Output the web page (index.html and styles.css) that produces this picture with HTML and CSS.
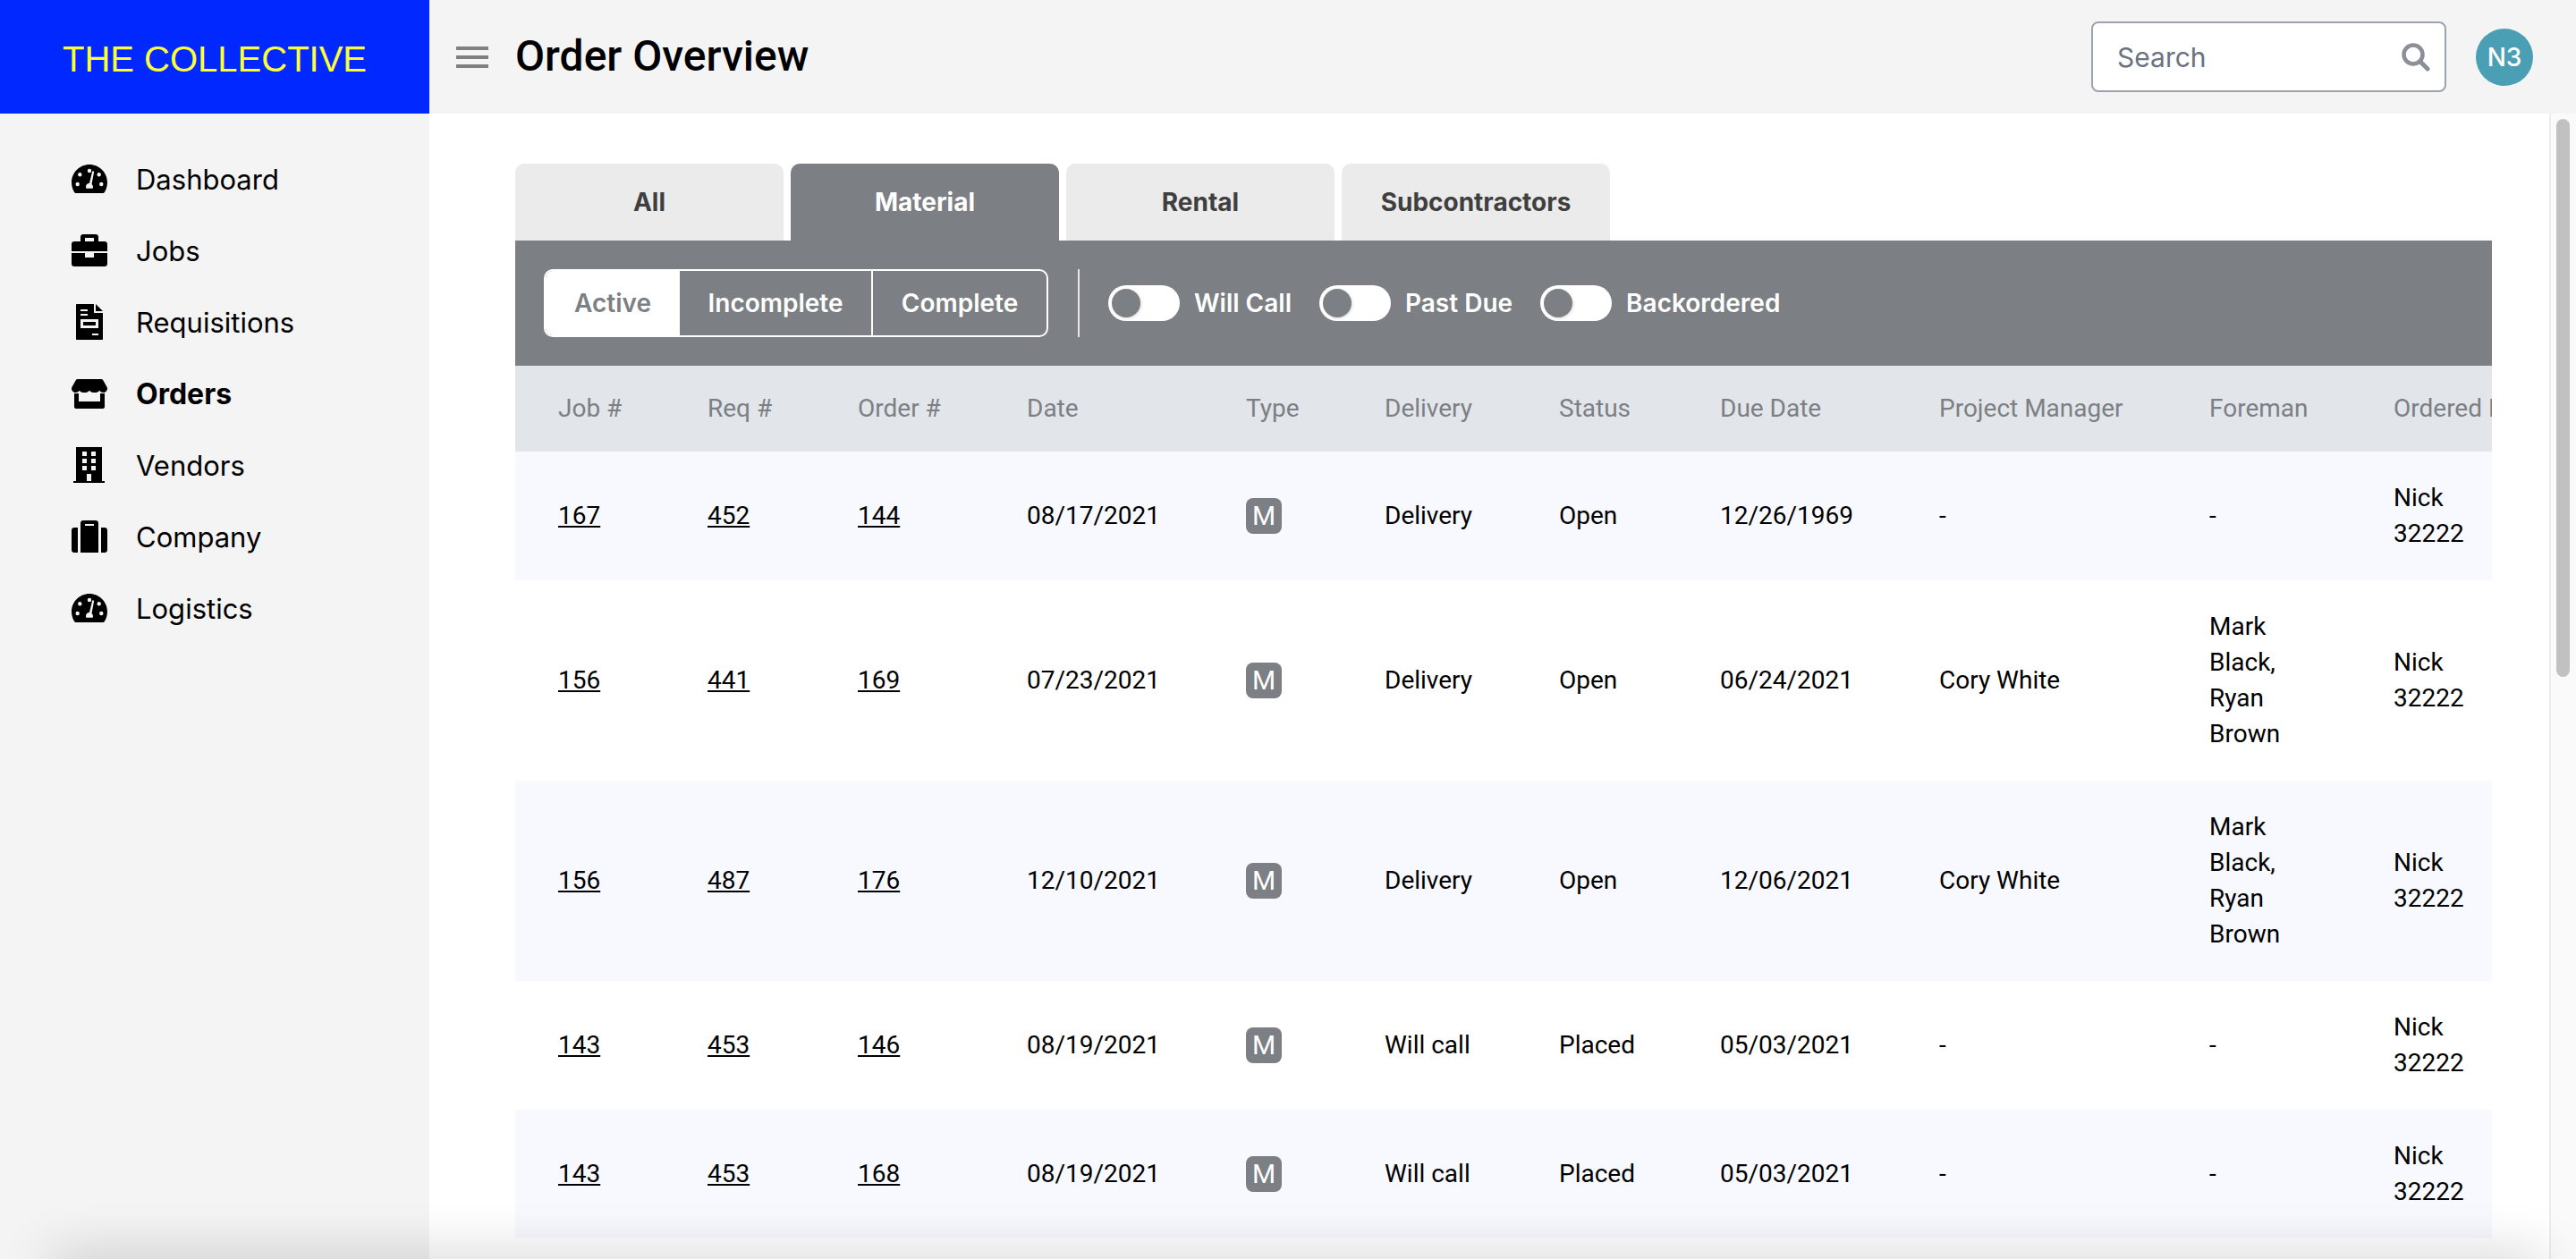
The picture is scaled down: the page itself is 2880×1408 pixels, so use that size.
FILE: index.html
```html
<!DOCTYPE html>
<html lang="en">
<head>
  <meta charset="UTF-8">
  <title>Order Overview</title>
  <link rel="stylesheet" href="styles.css">
</head>
<body>

<svg class="defs" width="0" height="0">
  <symbol id="gauge" viewBox="0 0 40 32">
    <path fill-rule="evenodd" d="M20 0C9 0 0 9 0 20c0 4.200 1.200 8.200 3.300 11.300.3.400.8.700 1.300.7h30.800c.5 0 1-.3 1.300-.7C38.800 28.200 40 24.200 40 20 40 9 31 0 20 0zM20 4.800a2.200 2.200 0 1 1 0 4.400 2.200 2.200 0 0 1 0-4.400zM9.300 9.100a2.200 2.200 0 1 1 0 4.400 2.200 2.200 0 0 1 0-4.400zM30.700 9.100a2.200 2.200 0 1 1 0 4.400 2.200 2.200 0 0 1 0-4.400zM6.700 19.800a2.200 2.200 0 1 1 0 4.400 2.200 2.200 0 0 1 0-4.400zM33.300 19.800a2.200 2.200 0 1 1 0 4.400 2.200 2.200 0 0 1 0-4.400zM23.300 7.200l1.900.6-2.700 14.100c1 .8 1.500 1.900 1.500 3.100 0 .6-.1 1.200-.4 1.800h-7.200c-.3-.6-.4-1.200-.4-1.800 0-2.300 1.800-4.100 4-4.200z"/>
  </symbol>
</svg>

<div class="app">
  <div class="logo">THE COLLECTIVE</div>

  <header class="topbar">
    <div class="burger"><span></span><span></span><span></span></div>
    <h1>Order Overview</h1>
    <div class="search">
      <span>Search</span>
      <svg width="32" height="32" viewBox="0 0 32 32"><circle cx="13" cy="13" r="10.500" fill="none" stroke="#8b9098" stroke-width="4.500"/><path d="M20.500 20.500 29 29" stroke="#8b9098" stroke-width="5" stroke-linecap="round"/></svg>
    </div>
    <div class="avatar">N3</div>
  </header>

  <nav class="sidebar">
    <a class="nav-item"><svg class="nav-icon" width="40" height="32"><use href="#gauge"/></svg>Dashboard</a>
    <a class="nav-item"><svg class="nav-icon" width="40" height="36" viewBox="0 0 40 36"><path fill-rule="evenodd" d="M13 0h14c1.700 0 3 1.300 3 3v5h7c1.700 0 3 1.300 3 3v8H0v-8c0-1.700 1.300-3 3-3h7V3c0-1.700 1.300-3 3-3zm2 4v4h10V4z"/><path d="M0 21h15v5h10v-5h15v12c0 1.700-1.300 3-3 3H3c-1.700 0-3-1.300-3-3z"/></svg>Jobs</a>
    <a class="nav-item"><svg class="nav-icon doc-icon" width="30" height="40" viewBox="0 0 30 40"><path fill-rule="evenodd" d="M1 0h19v9c0 .6.400 1 1 1h9v29c0 .6-.4 1-1 1H1c-.6 0-1-.4-1-1V1c0-.6.400-1 1-1zm4 6v2h8V6zm0 5v2h8v-2zm0 6v10h20V17zm3 3h14v4H8zm10 13v2h7v-2z"/><path d="M22 0l8 8h-8z"/></svg>Requisitions</a>
    <a class="nav-item active"><svg class="nav-icon" width="40" height="33" viewBox="0 0 40 33"><path d="M7 0h26c1 0 1.800.5 2.300 1.300L39.600 9c1 1.800.2 5.300-3.100 5.900-2.300.4-4-.6-5.200-2.200-1.200 1.500-3 2.300-5.600 2.300-2.600 0-4.500-.8-5.700-2.300-1.200 1.500-3.100 2.300-5.700 2.300-2.600 0-4.400-.8-5.600-2.300-1.200 1.600-2.900 2.600-5.200 2.200C.2 14.300-.6 10.800.4 9L4.700 1.300C5.200.5 6 0 7 0z"/><path d="M3 16h5v9h24v-9h5v15c0 1.100-.9 2-2 2H5c-1.100 0-2-.9-2-2z"/></svg>Orders</a>
    <a class="nav-item"><svg class="nav-icon bld-icon" width="35" height="40" viewBox="0 0 35 40"><path fill-rule="evenodd" d="M3 0h29v38h3v2H0v-2h3zm7 5v5h5V5zm10 0v5h5V5zM10 13v5h5v-5zm10 0v5h5v-5zM10 21v5h5v-5zm10 0v5h5v-5zm-5 9v8h5v-8z"/></svg>Vendors</a>
    <a class="nav-item"><svg class="nav-icon" width="40" height="36" viewBox="0 0 40 36"><path fill-rule="evenodd" d="M13 0h14c1.700 0 3 1.300 3 3v33H10V3c0-1.700 1.300-3 3-3zm2 4v2h10V4z"/><path d="M7 8v28H3c-1.700 0-3-1.300-3-3V11c0-1.700 1.300-3 3-3zM33 8h4c1.700 0 3 1.300 3 3v22c0 1.700-1.300 3-3 3h-4z"/></svg>Company</a>
    <a class="nav-item"><svg class="nav-icon" width="40" height="32"><use href="#gauge"/></svg>Logistics</a>
  </nav>

  <main class="main">
    <div class="content">
      <div class="tabs">
        <div class="tab">All</div>
        <div class="tab active">Material</div>
        <div class="tab">Rental</div>
        <div class="tab">Subcontractors</div>
      </div>

      <div class="toolbar">
        <div class="segments">
          <div class="segment seg-active">Active</div>
          <div class="segment seg-incomplete">Incomplete</div>
          <div class="segment seg-complete">Complete</div>
        </div>
        <div class="divider"></div>
        <div class="toggles">
          <label class="toggle-row"><span class="toggle"><span class="knob"></span></span>Will Call</label>
          <label class="toggle-row"><span class="toggle"><span class="knob"></span></span>Past Due</label>
          <label class="toggle-row"><span class="toggle"><span class="knob"></span></span>Backordered</label>
        </div>
      </div>

      <div class="table-wrap">
        <table class="orders">
          <colgroup>
            <col class="c-job"><col class="c-req"><col class="c-order"><col class="c-date"><col class="c-type"><col class="c-delivery"><col class="c-status"><col class="c-due"><col class="c-pm"><col class="c-foreman"><col class="c-by">
          </colgroup>
          <thead>
            <tr><th>Job #</th><th>Req #</th><th>Order #</th><th>Date</th><th>Type</th><th>Delivery</th><th>Status</th><th>Due Date</th><th>Project Manager</th><th>Foreman</th><th>Ordered By</th></tr>
          </thead>
          <tbody>
            <tr>
              <td><a href="#">167</a></td><td><a href="#">452</a></td><td><a href="#">144</a></td><td>08/17/2021</td><td><span class="badge">M</span></td><td>Delivery</td><td>Open</td><td>12/26/1969</td><td>-</td><td>-</td><td>Nick<br>32222</td>
            </tr>
            <tr>
              <td><a href="#">156</a></td><td><a href="#">441</a></td><td><a href="#">169</a></td><td>07/23/2021</td><td><span class="badge">M</span></td><td>Delivery</td><td>Open</td><td>06/24/2021</td><td>Cory White</td><td>Mark<br>Black,<br>Ryan<br>Brown</td><td>Nick<br>32222</td>
            </tr>
            <tr>
              <td><a href="#">156</a></td><td><a href="#">487</a></td><td><a href="#">176</a></td><td>12/10/2021</td><td><span class="badge">M</span></td><td>Delivery</td><td>Open</td><td>12/06/2021</td><td>Cory White</td><td>Mark<br>Black,<br>Ryan<br>Brown</td><td>Nick<br>32222</td>
            </tr>
            <tr>
              <td><a href="#">143</a></td><td><a href="#">453</a></td><td><a href="#">146</a></td><td>08/19/2021</td><td><span class="badge">M</span></td><td>Will call</td><td>Placed</td><td>05/03/2021</td><td>-</td><td>-</td><td>Nick<br>32222</td>
            </tr>
            <tr>
              <td><a href="#">143</a></td><td><a href="#">453</a></td><td><a href="#">168</a></td><td>08/19/2021</td><td><span class="badge">M</span></td><td>Will call</td><td>Placed</td><td>05/03/2021</td><td>-</td><td>-</td><td>Nick<br>32222</td>
            </tr>
          </tbody>
        </table>
      </div>
    </div>

    <div class="rail"><div class="thumb"></div></div>
  </main>
</div>

<div class="bottom-shadow"></div>

</body>
</html>
```

FILE: styles.css
```css
html, body { margin: 0; height: 100%; overflow: hidden; }
body { font-family: Roboto, "Liberation Sans", sans-serif; color: #000; background: #fff; }
.defs { display: block; height: 0; }

.app {
  display: grid;
  grid-template-columns: 480px 1fr;
  grid-template-rows: 127px 1fr;
  height: 1408px;
}

/* logo + top bar */
.logo {
  display: flex; align-items: center; justify-content: center;
  background: #0028ff; color: #ffff33;
  font-family: "Liberation Sans", Arial, sans-serif; font-size: 40px;
  padding-top: 5px; box-sizing: border-box;
}
.topbar {
  display: flex; align-items: center;
  background: #f4f4f4; padding: 0 48px 0 30px;
}
.burger { display: flex; flex-direction: column; gap: 6px; width: 36px; margin-right: 30px; }
.burger span { display: block; height: 4px; background: #808080; }
.topbar h1 { margin: 0 0 2px; font-size: 48px; font-weight: 500; line-height: 56px; flex: 1; }
.search {
  display: flex; align-items: center; justify-content: space-between;
  box-sizing: border-box; width: 397px; height: 79px;
  background: #fff; border: 2px solid #9ca3af; border-radius: 8px;
  padding: 0 16px 0 27px; margin-right: 33px;
  font-family: Inter, sans-serif; font-size: 30px; color: #6b7280;
}
.avatar {
  display: flex; align-items: center; justify-content: center;
  width: 64px; height: 64px; border-radius: 50%;
  background: #4a9fb5; color: #fff;
  font-family: Inter, sans-serif; font-size: 28px; font-weight: 500;
}

/* sidebar */
.sidebar { background: #f4f4f4; padding: 33px 0 0 80px; }
.nav-item { display: flex; align-items: center; height: 80px; font-family: Inter, sans-serif; font-size: 31px; }
.nav-item.active { font-size: 32px; font-weight: 700; }
.nav-icon { flex: none; margin-right: 32px; }
.doc-icon { margin: 0 37px 0 5px; }
.bld-icon { margin: 0 35px 0 2px; }

/* main area */
.main { display: flex; min-width: 0; overflow: hidden; }
.content { flex: 1; min-width: 0; padding: 56px 64px 0 96px; }
.rail { width: 30px; box-sizing: border-box; background: #fafafa; border-left: 2px solid #ececec; padding: 6px 0 0 6px; }
.thumb { width: 15px; height: 624px; background: #c1c1c1; border-radius: 8px; }

/* tabs */
.tabs { display: flex; gap: 8px; }
.tab {
  display: flex; align-items: center; justify-content: center;
  width: 300px; height: 86px; border-radius: 10px 10px 0 0;
  background: #ebebeb; color: #3f3f3f;
  font-family: Inter, sans-serif; font-size: 28px; font-weight: 700;
}
.tab.active { background: #7c7f84; color: #fff; }

/* filter bar */
.toolbar {
  display: flex; align-items: center; height: 140px; box-sizing: border-box;
  padding: 0 32px; background: #7c7f84; color: #fff;
  font-family: Inter, sans-serif; font-size: 28px; font-weight: 600;
}
.segments { display: flex; height: 76px; box-sizing: border-box; border: 2px solid #fff; border-radius: 10px; overflow: hidden; }
.segment { display: flex; align-items: center; justify-content: center; }
.seg-active { width: 150px; background: #fff; color: #7c7f84; }
.seg-incomplete { width: 216px; border-right: 2px solid #fff; box-sizing: border-box; }
.seg-complete { width: 194px; }
.divider { width: 2px; height: 76px; margin: 0 32px 0 33px; background: #e8e8e8; }
.toggles { display: flex; gap: 31px; }
.toggle-row { display: flex; align-items: center; gap: 16px; }
.toggle { display: flex; align-items: center; box-sizing: border-box; width: 80px; height: 40px; padding-left: 4px; background: #fff; border-radius: 20px; }
.knob { width: 32px; height: 32px; border-radius: 50%; background: #7c7f84; box-shadow: 1px 1px 3px rgba(0,0,0,.15); }

/* table */
.table-wrap { overflow: hidden; }
.orders { table-layout: fixed; width: 2450px; border-collapse: collapse; font-size: 28px; line-height: 40px; }
.c-job { width: 215px; }
.c-req { width: 168px; }
.c-order { width: 189px; }
.c-date { width: 245px; }
.c-type { width: 155px; }
.c-delivery { width: 195px; }
.c-status { width: 180px; }
.c-due { width: 245px; }
.c-pm { width: 302px; }
.c-foreman { width: 206px; }
.c-by { width: 350px; }
.orders th {
  padding: 28px 0; text-align: left; font-weight: 400; white-space: nowrap;
  background: #e2e5ea; color: #7c7f84;
}
.orders td { padding: 32px 0; vertical-align: middle; }
.orders th:first-child, .orders td:first-child { padding-left: 48px; }
.orders tbody tr:nth-child(odd) { background: #f7f9fe; }
.orders a { color: #000; }
.badge {
  display: flex; align-items: center; justify-content: center;
  width: 40px; height: 40px; border-radius: 8px;
  background: #7c7f84; color: #fff; font-size: 30px;
}

/* soft shadow from the sheet below the fold */
.bottom-shadow {
  position: fixed; left: 60px; right: 40px; bottom: -30px; height: 30px;
  box-shadow: 0 0 60px 4px rgba(0,0,0,.2);
}
```
